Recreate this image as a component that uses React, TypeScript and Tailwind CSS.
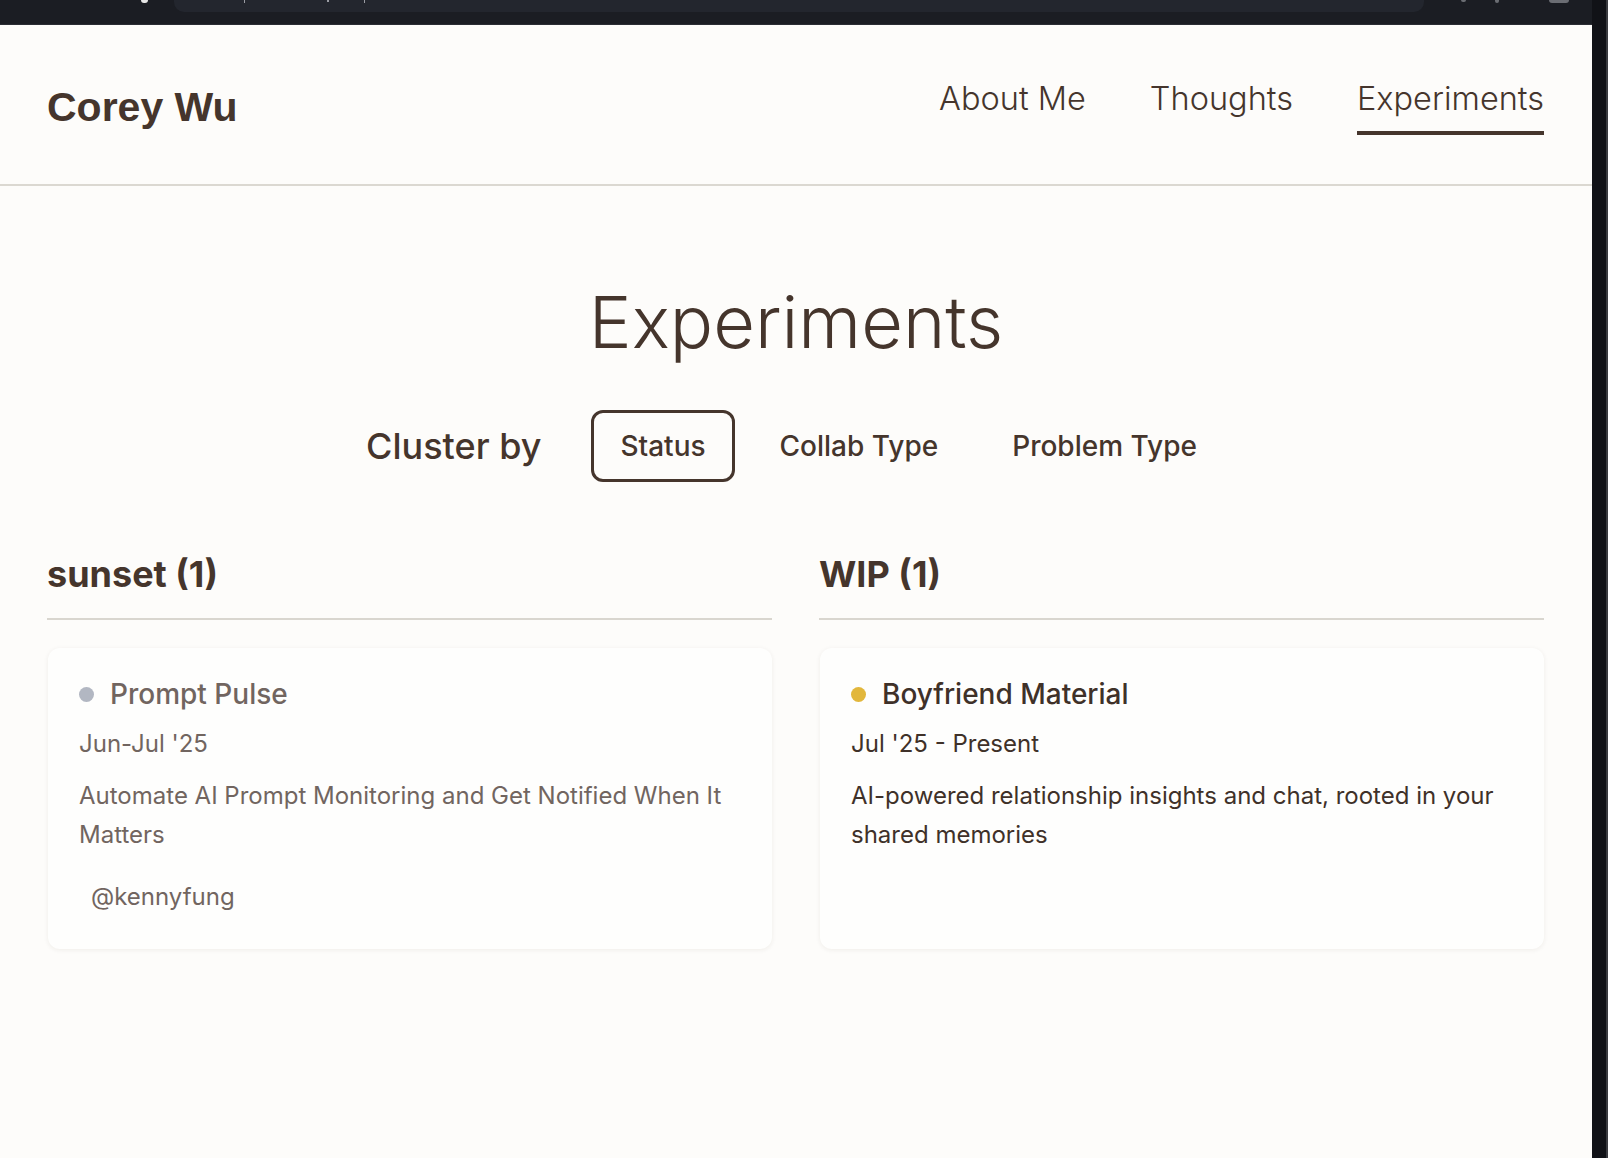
import React from "react";

type Experiment = {
  name: string;
  dates: string;
  blurb: string;
  handle?: string;
  dot: string;
  muted: boolean;
};

const groups: { title: string; items: Experiment[] }[] = [
  {
    title: "sunset (1)",
    items: [
      {
        name: "Prompt Pulse",
        dates: "Jun-Jul '25",
        blurb: "Automate AI Prompt Monitoring and Get Notified When It Matters",
        handle: "@kennyfung",
        dot: "bg-[#b2b7c2]",
        muted: true,
      },
    ],
  },
  {
    title: "WIP (1)",
    items: [
      {
        name: "Boyfriend Material",
        dates: "Jul '25 - Present",
        blurb:
          "AI-powered relationship insights and chat, rooted in your shared memories",
        dot: "bg-[#e2b73c]",
        muted: false,
      },
    ],
  },
];

const navLinks = ["About Me", "Thoughts", "Experiments"];
const clusterOptions = ["Status", "Collab Type", "Problem Type"];

// top strip of the browser window, mostly cut off in the shot
function BrowserChrome() {
  return (
    <div className="relative h-[25px] shrink-0 border-b border-[#2b2d34] bg-[#1b1d23]">
      <div className="ml-[174px] h-3 w-[1250px] rounded-b-[10px] bg-[#23262e]" />
      {/* fragments of glyphs peeking out of the top edge */}
      <span className="absolute left-[141px] top-0 h-[3px] w-[7px] rounded-b-full bg-[#e6e6e6]" />
      <span className="absolute left-[244px] top-0 h-[3px] w-px bg-[#9a9ca3]" />
      <span className="absolute left-[327px] top-0 h-[2px] w-[2px] bg-[#9a9ca3]" />
      <span className="absolute left-[364px] top-0 h-[3px] w-px bg-[#9a9ca3]" />
      <span className="absolute left-[1461px] top-0 h-[2px] w-[5px] rounded-b bg-[#6b6d73]" />
      <span className="absolute left-[1495px] top-0 h-[3px] w-[4px] rounded-b bg-[#6b6d73]" />
      <span className="absolute left-[1549px] top-0 h-[3px] w-[20px] rounded-b bg-[#6b6d73]" />
    </div>
  );
}

function ExperimentCard({ exp }: { exp: Experiment }) {
  const text = exp.muted ? "text-[#716560]" : "text-[#3f3129]";
  return (
    <div className="mt-7 flex-1 rounded-xl bg-[#fefefd] px-[31px] pb-8 pt-[30px] shadow-[0_1px_5px_rgba(60,40,20,0.07)]">
      <div className="flex items-center gap-4">
        <span className={`h-[15px] w-[15px] shrink-0 rounded-full ${exp.dot}`} />
        <h3 className={`text-[28px] font-medium leading-8 ${text}`}>
          {exp.name}
        </h3>
      </div>
      <div className={`mt-[18px] text-[24px] leading-8 ${text}`}>
        {exp.dates}
      </div>
      <p className={`mt-[17px] text-[24px] leading-[38.5px] ${text}`}>
        {exp.blurb}
      </p>
      {exp.handle && (
        <span
          className={`mt-[23px] inline-block rounded-full px-3 py-1 text-[24px] leading-8 ${text}`}
        >
          {exp.handle}
        </span>
      )}
    </div>
  );
}

export default function App() {
  const [cluster, setCluster] = React.useState("Status");

  return (
    <div className="flex h-[1158px] w-[1608px] overflow-hidden bg-[#111217] font-[Inter,'Noto_Sans',sans-serif]">
      <div className="flex w-[1592px] flex-col">
        <BrowserChrome />

        <div className="flex-1 bg-[#fdfcfa] text-[#45352c]">
          {/* header */}
          <header className="flex h-[161px] items-center justify-between border-b-2 border-[#dbd8d1] px-12 pt-[5px]">
            <a className="-ml-px font-['Liberation_Sans',Arial,sans-serif] text-[41px] font-bold leading-[48px]">
              Corey Wu
            </a>
            <nav className="flex gap-16">
              {navLinks.map((l) => {
                const active = l === "Experiments";
                return (
                  <a
                    key={l}
                    className={`border-b-4 pb-3 text-[32.5px] font-light leading-10 ${
                      active ? "border-[#45352c]" : "border-transparent"
                    }`}
                  >
                    {l}
                  </a>
                );
              })}
            </nav>
          </header>

          <main className="px-12 pt-[100px]">
            <h1 className="text-center text-[72px] font-light leading-[72px]">
              Experiments
            </h1>

            {/* cluster switcher */}
            <div className="mt-[52px] flex items-center justify-center">
              <span className="mr-[50px] text-[36px] font-medium leading-10">
                Cluster by
              </span>
              <div className="flex gap-4">
                {clusterOptions.map((o) => (
                  <button
                    key={o}
                    onClick={() => setCluster(o)}
                    className={`rounded-xl border-[3px] px-[26px] py-4 text-[28px] font-medium leading-[34px] ${
                      cluster === o ? "border-[#45352c]" : "border-transparent"
                    }`}
                  >
                    {o}
                  </button>
                ))}
              </div>
            </div>

            <div className="mt-[73px] grid grid-cols-2 gap-12">
              {groups.map((g) => (
                <section key={g.title} className="flex flex-col">
                  <h2 className="-ml-px border-b-2 border-[#d9d6cf] pb-[25px] text-[36px] font-bold leading-[38px]">
                    {g.title}
                  </h2>
                  {g.items.map((exp) => (
                    <ExperimentCard key={exp.name} exp={exp} />
                  ))}
                </section>
              ))}
            </div>
          </main>
        </div>
      </div>
      <div className="flex w-4 justify-end">
        <div className="w-[2px] bg-[#3a3b40]" />
      </div>
    </div>
  );
}
